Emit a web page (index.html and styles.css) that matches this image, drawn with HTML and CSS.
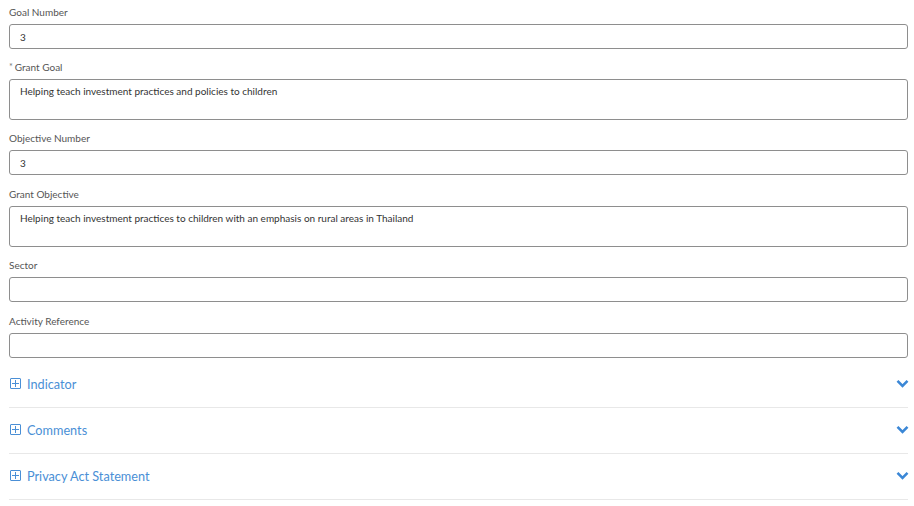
FILE: index.html
```html
<!DOCTYPE html>
<html lang="en">
<head>
    <meta charset="UTF-8">
    <meta name="viewport" content="width=device-width, initial-scale=1.0">
    <title>Grant Objective</title>
    <link rel="stylesheet" href="styles.css">
</head>
<body>

<div class="form">
    <div class="field">
        <label>Goal Number</label>
        <div class="input">3</div>
    </div>

    <div class="field">
        <label><span class="req">*</span>Grant Goal</label>
        <div class="input textarea">Helping teach investment practices and policies to children</div>
    </div>

    <div class="field loose">
        <label>Objective Number</label>
        <div class="input">3</div>
    </div>

    <div class="field">
        <label>Grant Objective</label>
        <div class="input textarea">Helping teach investment practices to children with an emphasis on rural areas in Thailand</div>
    </div>

    <div class="field loose">
        <label>Sector</label>
        <div class="input"></div>
    </div>

    <div class="field">
        <label>Activity Reference</label>
        <div class="input"></div>
    </div>

    <!-- Collapsible sections -->
    <div class="sections">
        <div class="section">
            <span class="plus"></span>
            <span class="title">Indicator</span>
            <svg class="chevron" width="13" height="9" viewBox="0 0 13 9"><path d="M1.5 1.8 L6.5 6.8 L11.5 1.8" fill="none" stroke="#3b87d6" stroke-width="2.6"/></svg>
        </div>
        <div class="section">
            <span class="plus"></span>
            <span class="title">Comments</span>
            <svg class="chevron" width="13" height="9" viewBox="0 0 13 9"><path d="M1.5 1.8 L6.5 6.8 L11.5 1.8" fill="none" stroke="#3b87d6" stroke-width="2.6"/></svg>
        </div>
        <div class="section">
            <span class="plus"></span>
            <span class="title">Privacy Act Statement</span>
            <svg class="chevron" width="13" height="9" viewBox="0 0 13 9"><path d="M1.5 1.8 L6.5 6.8 L11.5 1.8" fill="none" stroke="#3b87d6" stroke-width="2.6"/></svg>
        </div>
    </div>
</div>

</body>
</html>
```

FILE: styles.css
```css
body {
    font-family: Lato, "Open Sans", sans-serif;
    background-color: #ffffff;
    margin: 0;
    padding: 5px 6px 0 9px;
}
.form {
    display: flex;
    flex-direction: column;
}
.field {
    display: flex;
    flex-direction: column;
    gap: 5px;
    margin-bottom: 11px;
}
.field.loose {
    margin-bottom: 12px;
}
label {
    display: block;
    height: 14px;
    font-size: 10px;
    line-height: 14px;
    color: #555555;
}
.req {
    color: #777;
    font-size: 9px;
    line-height: 0;
    margin-right: 2px;
    vertical-align: 1px;
}
.input {
    box-sizing: border-box;
    height: 25px;
    border: 1px solid #8e8e8e;
    border-radius: 3px;
    padding: 6px 10px;
    font-size: 10px;
    line-height: 12px;
    color: #333333;
}
.textarea {
    height: 41px;
    padding-top: 5px;
}
.sections {
    margin-top: -7px;
}
.section {
    box-sizing: border-box;
    display: flex;
    align-items: center;
    height: 46px;
    padding-bottom: 2px;
    border-bottom: 1px solid #e8e8e8;
    color: #4a8fd6;
    font-size: 12.7px;
}
.plus {
    box-sizing: border-box;
    width: 11px;
    height: 11px;
    border: 1px solid #4a8fd6;
    border-radius: 1px;
    margin: 0 6px 0 1px;
    position: relative;
}
.plus::before, .plus::after {
    content: "";
    position: absolute;
    background: #4a8fd6;
}
.plus::before {
    left: 1px;
    right: 1px;
    top: 4px;
    height: 1px;
}
.plus::after {
    top: 1px;
    bottom: 1px;
    left: 4px;
    width: 1px;
}
.title {
    flex: 1;
}
.chevron {
    margin-right: -1px;
}
```
